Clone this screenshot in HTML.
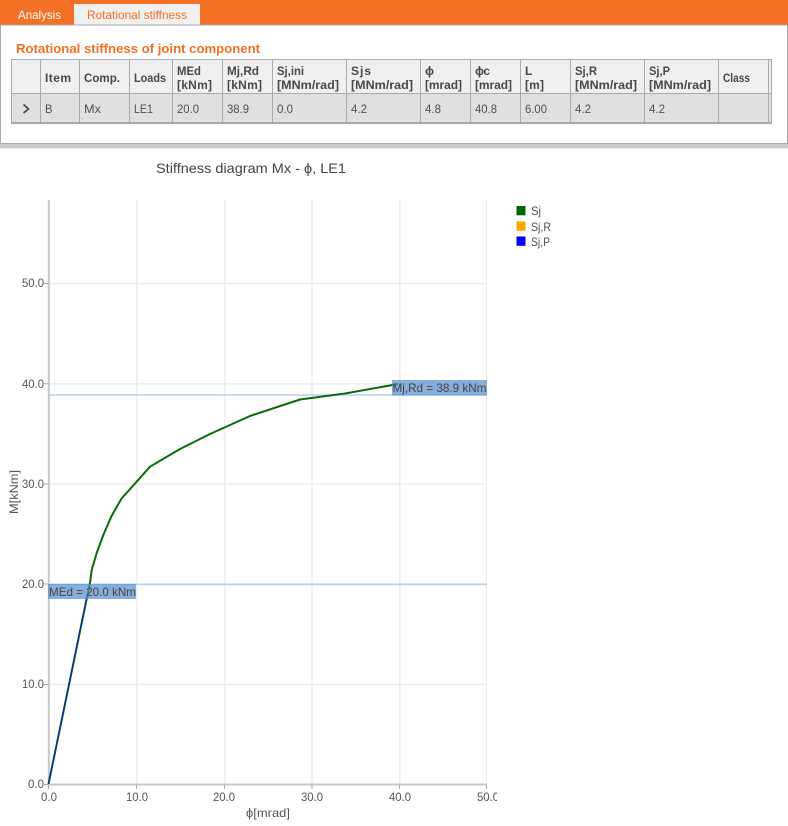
<!DOCTYPE html>
<html><head><meta charset="utf-8"><title>Rotational stiffness</title>
<style>
html,body{margin:0;padding:0;background:#fff;width:788px;height:826px;overflow:hidden}
svg{display:block;position:absolute;left:0;top:0}
text{font-family:"Liberation Sans","DejaVu Sans",sans-serif;font-size:12px;fill:#505050}
.h{font-weight:bold;fill:#484848}
.a{fill:#555}
</style></head><body>
<svg width="788" height="826" viewBox="0 0 788 826">
<defs><clipPath id="c"><rect x="0" y="150" width="497" height="676"/></clipPath></defs>
<!-- top -->
<rect x="0" y="0" width="788" height="25" fill="#f47024"/>
<rect x="74" y="4" width="126" height="21" fill="#f0f0f0"/>
<text x="18" y="19" textLength="43" lengthAdjust="spacingAndGlyphs" style="fill:#fff">Analysis</text>
<text x="87" y="19" textLength="100" lengthAdjust="spacingAndGlyphs" style="fill:#f47024">Rotational stiffness</text>
<rect x="0.5" y="25" width="787" height="118.5" fill="#fff" stroke="#aaa"/>
<rect x="0" y="144" width="788" height="4.500" fill="#ccc"/>
<text x="16" y="53" textLength="244" lengthAdjust="spacingAndGlyphs" style="font-weight:bold;font-size:13px;fill:#f47024">Rotational stiffness of joint component</text>
<!-- table -->
<rect x="12" y="60" width="759" height="34" fill="#f0f0f0"/>
<rect x="12" y="94" width="759" height="29" fill="#e0e0e0"/>
<g stroke="#aaa" stroke-width="1" fill="none">
<path d="M11.5 59.5H771.5V123M11.5 59.5V123M11.5 93.5H771.5"/>
<path d="M40.5 60V123M79.5 60V123M129.5 60V123M172.5 60V123M222.5 60V123M272.5 60V123M346.5 60V123M420.5 60V123M470.5 60V123M520.5 60V123M570.5 60V123M644.5 60V123M718.5 60V123M768.5 60V123"/>
<path d="M11 123H772" stroke-width="2"/>
</g>
<path d="M23.5 104.5L28.5 109L23.5 113" fill="none" stroke="#444" stroke-width="1.6"/>
<g>
<text class="h" x="45" y="82" textLength="26" lengthAdjust="spacing">Item</text>
<text class="h" x="84" y="82" textLength="36" lengthAdjust="spacingAndGlyphs">Comp.</text>
<text class="h" x="134" y="82" textLength="32" lengthAdjust="spacingAndGlyphs">Loads</text>
<text class="h" x="177" y="75" textLength="24" lengthAdjust="spacingAndGlyphs">MEd</text>
<text class="h" x="177" y="89" textLength="35" lengthAdjust="spacing">[kNm]</text>
<text class="h" x="227" y="75" textLength="32" lengthAdjust="spacingAndGlyphs">Mj,Rd</text>
<text class="h" x="227" y="89" textLength="35" lengthAdjust="spacing">[kNm]</text>
<text class="h" x="277" y="75" textLength="27" lengthAdjust="spacingAndGlyphs">Sj,ini</text>
<text class="h" x="277" y="89" textLength="62" lengthAdjust="spacingAndGlyphs">[MNm/rad]</text>
<text class="h" x="351" y="75" textLength="20" lengthAdjust="spacing">Sjs</text>
<text class="h" x="351" y="89" textLength="62" lengthAdjust="spacingAndGlyphs">[MNm/rad]</text>
<text class="h" x="425" y="75">ϕ</text>
<text class="h" x="425" y="89" textLength="37" lengthAdjust="spacing">[mrad]</text>
<text class="h" x="475" y="75" textLength="15" lengthAdjust="spacing">ϕc</text>
<text class="h" x="475" y="89" textLength="37" lengthAdjust="spacing">[mrad]</text>
<text class="h" x="525" y="75">L</text>
<text class="h" x="525" y="89" textLength="19" lengthAdjust="spacing">[m]</text>
<text class="h" x="575" y="75" textLength="22" lengthAdjust="spacingAndGlyphs">Sj,R</text>
<text class="h" x="575" y="89" textLength="62" lengthAdjust="spacingAndGlyphs">[MNm/rad]</text>
<text class="h" x="649" y="75" textLength="21" lengthAdjust="spacingAndGlyphs">Sj,P</text>
<text class="h" x="649" y="89" textLength="62" lengthAdjust="spacingAndGlyphs">[MNm/rad]</text>
<text class="h" x="723" y="82" textLength="27" lengthAdjust="spacingAndGlyphs">Class</text>
</g>
<g>
<text x="45" y="113" textLength="7.500" lengthAdjust="spacingAndGlyphs">B</text>
<text x="84" y="113" textLength="17" lengthAdjust="spacingAndGlyphs">Mx</text>
<text x="134" y="113" textLength="19" lengthAdjust="spacingAndGlyphs">LE1</text>
<text x="177" y="113" textLength="22" lengthAdjust="spacingAndGlyphs">20.0</text>
<text x="227" y="113" textLength="22" lengthAdjust="spacingAndGlyphs">38.9</text>
<text x="277" y="113" textLength="16" lengthAdjust="spacingAndGlyphs">0.0</text>
<text x="351" y="113" textLength="16" lengthAdjust="spacingAndGlyphs">4.2</text>
<text x="425" y="113" textLength="16" lengthAdjust="spacingAndGlyphs">4.8</text>
<text x="475" y="113" textLength="22" lengthAdjust="spacingAndGlyphs">40.8</text>
<text x="525" y="113" textLength="22" lengthAdjust="spacingAndGlyphs">6.00</text>
<text x="575" y="113" textLength="16" lengthAdjust="spacingAndGlyphs">4.2</text>
<text x="649" y="113" textLength="16" lengthAdjust="spacingAndGlyphs">4.2</text>
</g>
<!-- chart title -->
<text x="156" y="173" textLength="190" lengthAdjust="spacingAndGlyphs" style="font-size:14px;fill:#444">Stiffness diagram Mx - ϕ, LE1</text>
<!-- grid -->
<g stroke="#eeeeee" stroke-width="1.600" fill="none">
<path d="M136.8 200V784M224.6 200V784M312 200V784M399.8 200V784"/>
<path d="M486.5 200V784" stroke-width="1"/>
<path d="M49 283.5H487M49 383.8H487M49 484H487M49 584H487M49 684.5H487"/>
</g>
<!-- reference lines -->
<path d="M49 395H487" stroke="#b9d0ea" stroke-width="1.600"/>
<path d="M49 584.3H487" stroke="#b9d0ea" stroke-width="1.600"/>
<!-- axes -->
<g stroke="#c8c8c8" fill="none">
<path d="M48.8 200V785" stroke-width="2"/>
<path d="M48 784.5H487" stroke-width="2"/>
<path d="M44 283.5H48M44 383.8H48M44 484H48M44 584H48M44 684.5H48M44 784.500H48" stroke="#aaa" stroke-width="1"/>
<path d="M48.5 785V789M136.5 785V789M224.5 785V789M312 785V789M399.5 785V789M486.5 785V789" stroke="#aaa" stroke-width="1"/>
</g>
<!-- curve -->
<polyline points="48.5,784 90,583 91.7,570 96.700,553 103.300,535 111.700,515.700 121.700,498.300 136.700,481.700 150,466.700 180,449 210,434 230,425 250,416 300,399.500 345,393.500 398,384" fill="none" stroke="#0a6b0a" stroke-width="2" stroke-linejoin="round"/>
<line x1="48.5" y1="784" x2="87" y2="595" stroke="#1616d8" stroke-width="1"/>
<!-- labels -->
<rect x="48" y="584" width="88" height="15" fill="#5a8fcf" fill-opacity=".72"/>
<rect x="392" y="380" width="95" height="15.500" fill="#5a8fcf" fill-opacity=".72"/>
<text x="49" y="596" textLength="87" lengthAdjust="spacingAndGlyphs" style="fill:#444">MEd = 20.0 kNm</text>
<text x="392.500" y="392" textLength="94" lengthAdjust="spacingAndGlyphs" style="fill:#444">Mj,Rd = 38.9 kNm</text>
<!-- axis labels -->
<g>
<text class="a" x="22" y="287" textLength="22" lengthAdjust="spacingAndGlyphs">50.0</text>
<text class="a" x="22" y="388" textLength="22" lengthAdjust="spacingAndGlyphs">40.0</text>
<text class="a" x="22" y="488" textLength="22" lengthAdjust="spacingAndGlyphs">30.0</text>
<text class="a" x="22" y="588" textLength="22" lengthAdjust="spacingAndGlyphs">20.0</text>
<text class="a" x="22" y="688" textLength="22" lengthAdjust="spacingAndGlyphs">10.0</text>
<text class="a" x="28" y="788" textLength="16" lengthAdjust="spacingAndGlyphs">0.0</text>
<text class="a" x="41" y="801" textLength="16" lengthAdjust="spacingAndGlyphs">0.0</text>
<text class="a" x="126" y="801" textLength="22" lengthAdjust="spacingAndGlyphs">10.0</text>
<text class="a" x="213" y="801" textLength="22" lengthAdjust="spacingAndGlyphs">20.0</text>
<text class="a" x="301" y="801" textLength="22" lengthAdjust="spacingAndGlyphs">30.0</text>
<text class="a" x="389" y="801" textLength="22" lengthAdjust="spacingAndGlyphs">40.0</text>
<g clip-path="url(#c)"><text class="a" x="477" y="801" textLength="22" lengthAdjust="spacingAndGlyphs">50.0</text></g>
<text class="a" x="246" y="817" textLength="44" lengthAdjust="spacingAndGlyphs">ϕ[mrad]</text>
<text class="a" transform="translate(18 514) rotate(-90)" x="0" y="0" textLength="44" lengthAdjust="spacingAndGlyphs">M[kNm]</text>
</g>
<!-- legend -->
<rect x="516.500" y="206" width="9" height="9.300" fill="#006400"/>
<rect x="516.500" y="221.500" width="9" height="9.300" fill="#ffa500"/>
<rect x="516.500" y="236.500" width="9" height="9.300" fill="#0000ff"/>
<text x="531" y="215" textLength="10" lengthAdjust="spacingAndGlyphs">Sj</text>
<text x="531" y="231" textLength="20" lengthAdjust="spacingAndGlyphs">Sj,R</text>
<text x="531" y="246" textLength="19" lengthAdjust="spacingAndGlyphs">Sj,P</text>
</svg>
</body></html>
